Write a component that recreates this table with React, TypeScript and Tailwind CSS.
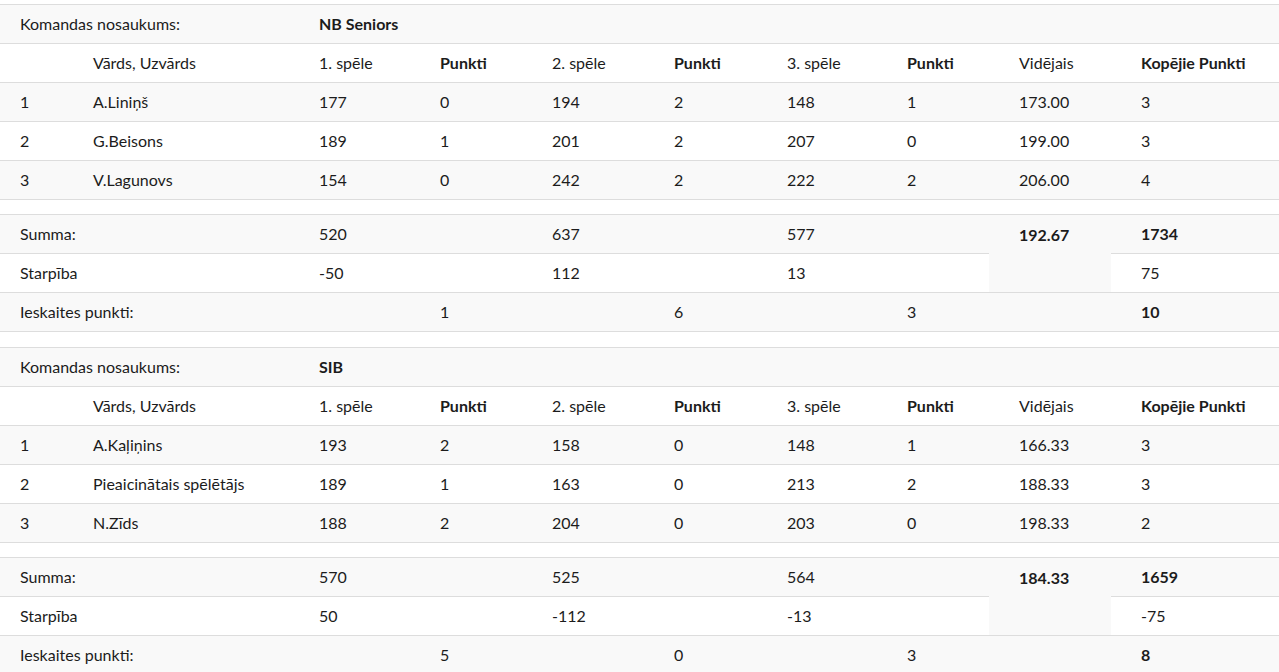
import React from "react";

type Cell = { t?: string; b?: boolean; span?: number; rows?: number; gray?: boolean };

const GRID =
  "grid grid-cols-[63px_226px_121px_112px_122px_113px_120px_112px_122px_168px]";

const TEAMS = [
  {
    name: "NB Seniors",
    players: [
      ["1", "A.Liniņš", "177", "0", "194", "2", "148", "1", "173.00", "3"],
      ["2", "G.Beisons", "189", "1", "201", "2", "207", "0", "199.00", "3"],
      ["3", "V.Lagunovs", "154", "0", "242", "2", "222", "2", "206.00", "4"],
    ],
    sum: ["520", "637", "577"],
    avg: "192.67",
    total: "1734",
    diff: ["-50", "112", "13"],
    diffTotal: "75",
    points: ["1", "6", "3"],
    pointsTotal: "10",
  },
  {
    name: "SIB",
    players: [
      ["1", "A.Kaļiņins", "193", "2", "158", "0", "148", "1", "166.33", "3"],
      ["2", "Pieaicinātais spēlētājs", "189", "1", "163", "0", "213", "2", "188.33", "3"],
      ["3", "N.Zīds", "188", "2", "204", "0", "203", "0", "198.33", "2"],
    ],
    sum: ["570", "525", "564"],
    avg: "184.33",
    total: "1659",
    diff: ["50", "-112", "-13"],
    diffTotal: "-75",
    points: ["5", "0", "3"],
    pointsTotal: "8",
  },
];

function Row({ cells, striped }: { cells: Cell[]; striped?: boolean }) {
  let col = 0;
  return (
    <>
      {cells.map((c, i) => {
        const first = col === 0;
        col += c.span ?? 1;
        return (
          <div
            key={i}
            className={[
              "flex border-t border-[#dddddd]",
              c.rows === 2 ? "row-span-2 items-start pt-[8px]" : "h-[39px] items-center",
              c.span === 2 ? "col-span-2" : c.span === 8 ? "col-span-8" : "",
              first ? "pl-[20px]" : "pl-[30px]",
              striped || c.gray ? "bg-[#f9f9f9]" : "bg-white",
              c.b ? "font-bold" : "",
            ].join(" ")}
          >
            {c.t}
          </div>
        );
      })}
    </>
  );
}

function TeamTable({ team }: { team: (typeof TEAMS)[number] }) {
  const head = ["", "Vārds, Uzvārds", "1. spēle", "Punkti", "2. spēle", "Punkti", "3. spēle", "Punkti", "Vidējais", "Kopējie Punkti"];
  const bold = [3, 5, 7, 9];
  return (
    <div className={GRID + " border-b border-[#dddddd]"}>
      <Row
        striped
        cells={[
          { t: "Komandas nosaukums:", span: 2 },
          { t: team.name, b: true, span: 8 },
        ]}
      />
      <Row cells={head.map((t, i) => ({ t, b: bold.includes(i) }))} />
      {team.players.map((p, i) => (
        <Row key={i} striped={i % 2 === 0} cells={p.map((t) => ({ t }))} />
      ))}
    </div>
  );
}

function SummaryTable({ team }: { team: (typeof TEAMS)[number] }) {
  return (
    <div className={GRID + " grid-rows-[39px_39px_39px] border-b border-[#dddddd]"}>
      <Row
        striped
        cells={[
          { t: "Summa:", span: 2 },
          { t: team.sum[0] },
          {},
          { t: team.sum[1] },
          {},
          { t: team.sum[2] },
          {},
          { t: team.avg, b: true, rows: 2 },
          { t: team.total, b: true },
        ]}
      />
      <Row
        cells={[
          { t: "Starpība", span: 2 },
          { t: team.diff[0] },
          {},
          { t: team.diff[1] },
          {},
          { t: team.diff[2] },
          {},
          { t: team.diffTotal },
        ]}
      />
      <Row
        striped
        cells={[
          { t: "Ieskaites punkti:", span: 2 },
          {},
          { t: team.points[0] },
          {},
          { t: team.points[1] },
          {},
          { t: team.points[2] },
          {},
          { t: team.pointsTotal, b: true },
        ]}
      />
    </div>
  );
}

export default function App() {
  return (
    <div className="min-h-screen w-[1279px] overflow-hidden bg-white pt-[4px] font-['Lato','Open_Sans',sans-serif] text-[16px] text-[#1c1c1c]">
      {TEAMS.map((team, i) => (
        <div key={i} className={i > 0 ? "mt-[15px]" : ""}>
          <TeamTable team={team} />
          <div className="mt-[14px]">
            <SummaryTable team={team} />
          </div>
        </div>
      ))}
    </div>
  );
}
